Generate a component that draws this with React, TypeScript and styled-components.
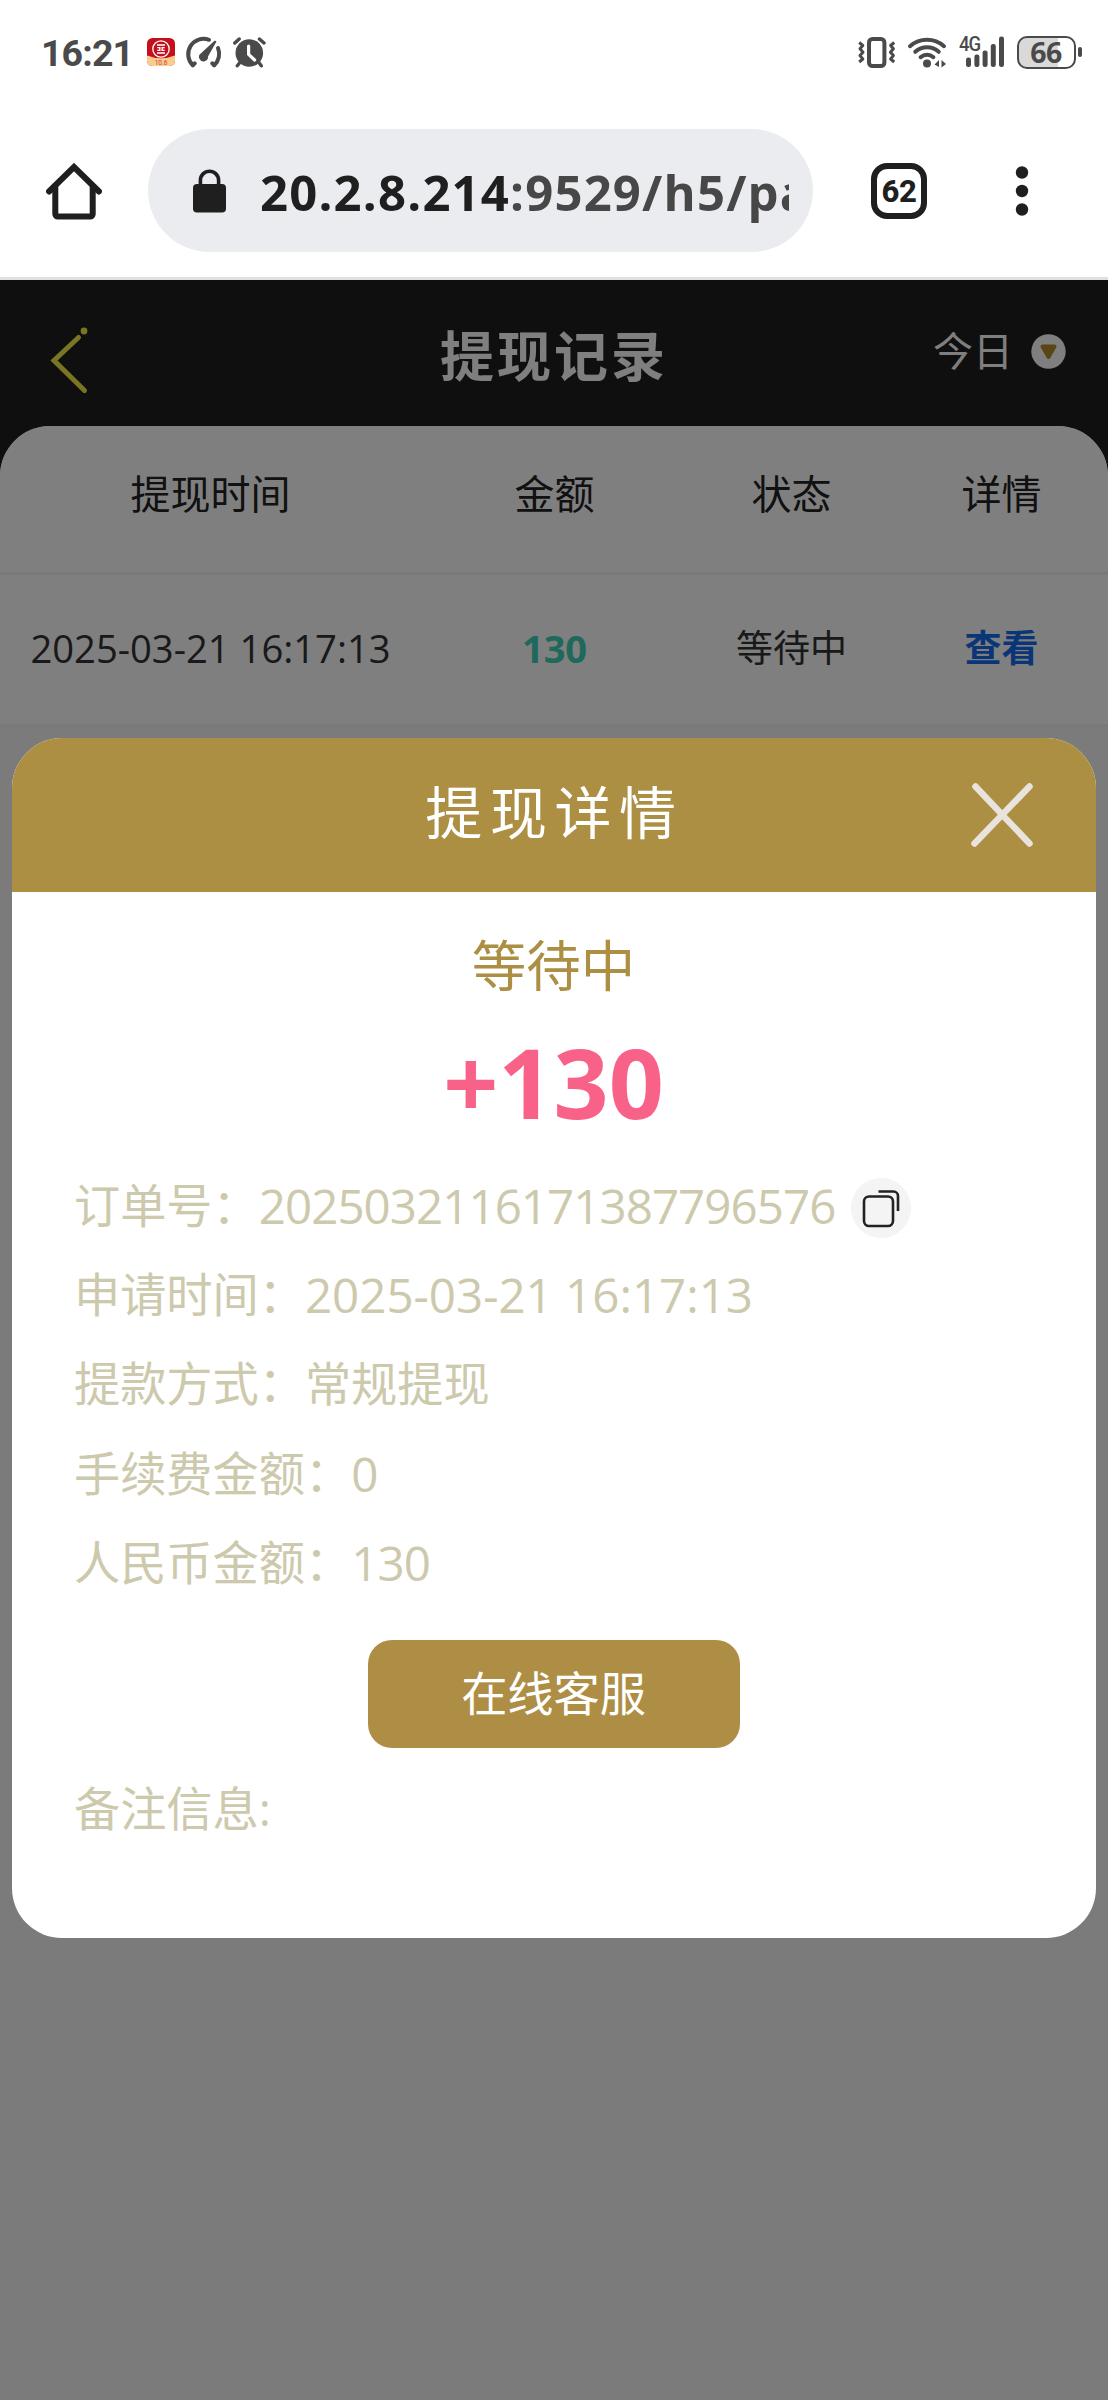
import React from "react";
import styled, { createGlobalStyle } from "styled-components";

const Global = createGlobalStyle`
  * { box-sizing: border-box; }
  body {
    margin: 0;
    background: #f7f7f7;
    font-family: "Open Sans", "Noto Sans CJK SC", sans-serif;
  }
`;

const Screen = styled.div`
  width: 1108px;
  height: 2400px;
  display: flex;
  flex-direction: column;
  overflow: hidden;
`;

const StatusBar = styled.div`
  flex: none;
  height: 104px;
  padding: 0 26px 0 41px;
  display: flex;
  align-items: center;
  background: #fff;
  color: #4a4a4a;
`;

const Clock = styled.span`
  width: 106px;
  padding-top: 2px;
  font: 700 37.5px/40px Roboto, sans-serif;
  letter-spacing: -0.9px;
`;

const StatusIcon = styled.svg<{ $gap?: number }>`
  flex: none;
  display: block;
  overflow: visible;
  margin-left: ${(p) => p.$gap ?? 0}px;
`;

const Spacer = styled.div`
  flex: 1;
`;

const Signal = styled.div`
  position: relative;
  width: 44px;
  height: 32px;
  margin-left: 13px;
`;

const SignalLabel = styled.span`
  position: absolute;
  left: -1px;
  top: -1px;
  font: 500 21px/19px Roboto, sans-serif;
  letter-spacing: -1px;
  transform: scaleX(0.88);
  transform-origin: left;
`;

const Battery = styled.div`
  width: 59px;
  height: 33px;
  margin-left: 13px;
  border: 2.5px solid #4a4a4a;
  border-radius: 10px;
  background: linear-gradient(to right, #d9d9d9 70%, #fff 70%);
  font: 700 28.5px/28px "Open Sans", sans-serif;
  letter-spacing: -0.5px;
  text-align: center;
`;

const BatteryTip = styled.div`
  width: 4px;
  height: 10px;
  margin-left: 2.5px;
  border-radius: 2px;
  background: #4a4a4a;
`;

const BrowserBar = styled.div`
  flex: none;
  height: 176px;
  padding: 25px 79px 0 46px;
  display: flex;
  align-items: flex-start;
  background: #fff;
  border-bottom: 3px solid #e0e0e0;
`;

const BarSlot = styled.div<{ $width: number; $left?: number }>`
  width: ${(p) => p.$width}px;
  margin-left: ${(p) => p.$left ?? 0}px;
  height: 124px;
  display: flex;
  align-items: center;
`;

const AddressPill = styled.div`
  width: 665px;
  height: 123px;
  margin-left: 46px;
  padding: 0 24px 0 45px;
  display: flex;
  align-items: center;
  border-radius: 62px;
  background: #ebecf0;
`;

const Url = styled.div`
  flex: 1;
  display: flex;
  margin-left: 34px;
  padding-top: 2px;
  overflow: hidden;
  white-space: nowrap;
  font: 700 49px/70px "Open Sans", sans-serif;
  letter-spacing: 1.2px;
  color: #1f1f1f;
`;

const UrlPath = styled.span`
  color: #474747;
`;

const TabCount = styled.div`
  width: 56px;
  height: 56px;
  border: 6px solid #1f1f1f;
  border-radius: 16px;
  font: 800 31px/45px Roboto, sans-serif;
  letter-spacing: -0.5px;
  text-align: center;
  color: #1f1f1f;
`;

const Page = styled.main`
  position: relative;
  flex: 1;
  display: flex;
  flex-direction: column;
  background: #1e1e1e;
`;

const PageHeader = styled.header`
  height: 146px;
  display: grid;
  grid-template-columns: 300px 1fr 300px;
  align-items: center;
  color: #fff;
`;

const BackArrow = styled.svg`
  margin: 14px 0 0 50px;
`;

const PageTitle = styled.h1`
  margin: 6px 0 0;
  font-size: 54px;
  line-height: 80px;
  font-weight: 700;
  letter-spacing: 3px;
  text-align: center;
`;

const DayFilter = styled.div`
  display: flex;
  justify-content: flex-end;
  align-items: center;
  padding: 0 42px 4px 0;
  gap: 18px;
  font-size: 40px;
  line-height: 60px;
`;

const Records = styled.section`
  flex: 1;
  border-radius: 50px 50px 0 0;
  background: #f7f7f7;
  overflow: hidden;
`;

const RecordRow = styled.div<{ $head?: boolean }>`
  display: grid;
  grid-template-columns: 421px 267px 207px 213px;
  align-items: center;
  text-align: center;
  height: ${(p) => (p.$head ? 149 : 152)}px;
  padding-bottom: ${(p) => (p.$head ? 10 : 4)}px;
  border-bottom: 3px solid #f3f3f3;
  background: #fff;
  font-size: ${(p) => (p.$head ? 40 : 37)}px;
  line-height: 60px;
  color: ${(p) => (p.$head ? "#222" : "#333")};
`;

const Time = styled.span`
  font-size: 38.2px;
`;

const Amount = styled.span`
  font-size: 38px;
  font-weight: 700;
  color: #3cd0b8;
`;

const ViewLink = styled.a`
  font-weight: 700;
  color: #146cf0;
`;

const Mask = styled.div`
  position: absolute;
  inset: 0;
  display: flex;
  justify-content: center;
  align-items: flex-start;
  padding-top: 458px;
  background: rgba(0, 0, 0, 0.5);
`;

const Dialog = styled.div`
  width: 1084px;
  height: 1200px;
  border-radius: 50px;
  overflow: hidden;
  background: #fff;
  color: #cdc9ac;
`;

const DialogHeader = styled.div`
  height: 154px;
  display: grid;
  grid-template-columns: 180px 1fr 180px;
  align-items: center;
  background: #ac8f43;
`;

const DialogTitle = styled.h2`
  grid-column: 2;
  margin: 0;
  padding: 0 0 6px 1px;
  font-weight: 400;
  font-size: 57px;
  line-height: 80px;
  letter-spacing: 7.6px;
  text-align: center;
  color: #fff;
`;

const DialogBody = styled.div`
  padding: 38px 63px 0 62px;
  display: flex;
  flex-direction: column;
`;

const Status = styled.div`
  font-size: 54.5px;
  line-height: 70px;
  text-align: center;
  color: #ac8f43;
`;

const Total = styled.div`
  height: 146px;
  margin-top: 15px;
  font: 700 96.5px/134px "Open Sans", sans-serif;
  text-align: center;
  color: #f96288;
`;

const Field = styled.div`
  height: 89.3px;
  display: flex;
  align-items: center;
  font-size: 46.2px;
  line-height: 70px;
  white-space: nowrap;
`;

const FieldValue = styled.span<{ $numeric?: boolean; $spacing?: number }>`
  font-size: ${(p) => (p.$numeric ? 47.5 : 46.2)}px;
  letter-spacing: ${(p) => p.$spacing ?? 0}px;
`;

const CopyButton = styled.button`
  width: 60px;
  height: 60px;
  margin: 5px 0 0 16px;
  padding: 0;
  border: 0;
  border-radius: 50%;
  background: #f4f4f4;
`;

const ServiceButton = styled.button`
  align-self: center;
  width: 372px;
  height: 108px;
  margin: 33px 0 16px;
  padding: 0 0 6px;
  border: 0;
  border-radius: 24px;
  background: #ae8e44;
  font-family: inherit;
  font-size: 46.2px;
  color: #fff;
`;

const HomeIcon = () => (
  <svg width="56" height="57" viewBox="0 0 56 57" fill="none" stroke="#1f1f1f" strokeWidth="6" strokeLinecap="round">
    <path d="M3 28.5 28 4 53 28.5" strokeLinejoin="miter" />
    <path d="M9.3 24V51a2.5 2.5 0 0 0 2.5 2.5H44.2a2.5 2.5 0 0 0 2.5-2.5V24" />
  </svg>
);

const LockIcon = () => (
  <svg width="33" height="44" viewBox="0 0 33 44">
    <path d="M7.4 17V11.3a9.1 9.1 0 0 1 18.2 0V17" fill="none" stroke="#1f1f1f" strokeWidth="3.6" />
    <rect y="15" width="33" height="28.5" rx="4" fill="#1f1f1f" />
  </svg>
);

const BankIcon = () => (
  <StatusIcon width="28" height="28" viewBox="0 0 28 28">
    <defs>
      <clipPath id="bank"><rect width="28" height="28" rx="5.5" /></clipPath>
    </defs>
    <g clipPath="url(#bank)">
      <rect width="28" height="28" fill="#c4101c" />
      <path d="M0 17.5Q14 23 28 17.5V28H0z" fill="#fbcb90" />
    </g>
    <circle cx="14" cy="11" r="8.2" fill="#c4101c" stroke="#fff" strokeWidth="1.3" />
    <path d="M10 7H18M10 15H18M10.3 9.6H12.8V12.4H10.3M17.7 9.6H15.2V12.4H17.7" stroke="#fff" strokeWidth="1.4" fill="none" />
    <text x="14" y="26.6" textAnchor="middle" fontFamily="Roboto, sans-serif" fontSize="6.5" fill="#c8452f">10.6</text>
  </StatusIcon>
);

const GaugeIcon = () => (
  <StatusIcon $gap={11} width="35" height="31" viewBox="0 0 35 31" fill="none" stroke="#4a4a4a" strokeWidth="4" strokeLinecap="round">
    <path d="M6.8 28.2A15.4 15.4 0 0 1 23 2.8" />
    <path d="M32 11A15.4 15.4 0 0 1 28.2 28.2" />
    <path d="M6.8 28.2L8.8 26.3M28.2 28.2L26.2 26.3" />
    <path d="M30.5 4.5 22 19.5A4.5 4.5 0 1 1 15 16.2L28.8 3.6z" fill="#4a4a4a" stroke="none" />
  </StatusIcon>
);

const AlarmIcon = () => (
  <StatusIcon $gap={12} width="33" height="31" viewBox="0 0 33 31" stroke="#4a4a4a" strokeLinecap="round" fill="none">
    <circle cx="16.3" cy="16" r="13.8" fill="#4a4a4a" stroke="none" />
    <path d="M1.8 6 6.2 2M26.4 2 31 6" strokeWidth="3.4" />
    <path d="M6.5 26 4.3 28.8M26.2 26 28.3 28.8" strokeWidth="3.4" />
    <path d="M15.6 9V17.4L21.6 23" stroke="#fff" strokeWidth="3.2" />
  </StatusIcon>
);

const VibrateIcon = () => (
  <StatusIcon width="38" height="31" viewBox="0 0 38 31" fill="none" stroke="#4a4a4a">
    <rect x="11" y="2" width="15.4" height="27" rx="3.5" strokeWidth="4" />
    <path d="M1.2 5.5 4.8 8.5 2 11.8 5 15.2 2 18.6 4.8 22 1.2 25M36.2 5.5 32.6 8.5 35.4 11.8 32.4 15.2 35.4 18.6 32.6 22 36.2 25" strokeWidth="3" strokeLinejoin="round" />
  </StatusIcon>
);

const WifiIcon = () => (
  <StatusIcon $gap={12} width="39" height="31" viewBox="0 0 39 31" fill="none" stroke="#4a4a4a" strokeWidth="4" strokeLinecap="round">
    <path d="M2 9.2A25.5 25.5 0 0 1 36 9.2" />
    <path d="M7.3 14.8A17.5 17.5 0 0 1 30.7 14.8" />
    <path d="M12.6 20.2A9.8 9.8 0 0 1 25.4 20.2" />
    <circle cx="19" cy="26.6" r="4" fill="#4a4a4a" stroke="none" />
    <path d="M26.5 27.5 31 23V30M33.5 30.5V23L38 27" fill="#4a4a4a" stroke="none" />
  </StatusIcon>
);

const bars = [
  { x: 6, top: 21.5 },
  { x: 14.4, top: 18.5 },
  { x: 22.6, top: 14.5 },
  { x: 30.8, top: 8 },
  { x: 39, top: 0.5 },
];

const rows = [
  { label: "申请时间：", value: "2025-03-21 16:17:13", numeric: true },
  { label: "提款方式：", value: "常规提现" },
  { label: "手续费金额：", value: "0", numeric: true, spacing: -1 },
  { label: "人民币金额：", value: "130", numeric: true, spacing: -0.8 },
];

export default function App() {
  return (
    <Screen lang="zh-CN">
      <Global />
      <StatusBar>
        <Clock>16:21</Clock>
        <BankIcon />
        <GaugeIcon />
        <AlarmIcon />
        <Spacer />
        <VibrateIcon />
        <WifiIcon />
        <Signal>
          <SignalLabel>4G</SignalLabel>
          <StatusIcon width="44" height="32" fill="#4a4a4a">
            {bars.map((b) => (
              <rect key={b.x} x={b.x} y={b.top} width="5" height={31 - b.top} rx="2.2" />
            ))}
          </StatusIcon>
        </Signal>
        <Battery>66</Battery>
        <BatteryTip />
      </StatusBar>

      <BrowserBar>
        <BarSlot $width={56}><HomeIcon /></BarSlot>
        <AddressPill>
          <LockIcon />
          <Url>
            <span>20.2.8.214</span>
            <UrlPath>:9529/h5/pa</UrlPath>
          </Url>
        </AddressPill>
        <BarSlot $width={56} $left={58}><TabCount>62</TabCount></BarSlot>
        <BarSlot $width={14} $left={88}>
          <svg width="14" height="52" fill="#1f1f1f">
            <circle cx="7" cy="7.5" r="6.2" />
            <circle cx="7" cy="26" r="6.2" />
            <circle cx="7" cy="44.5" r="6.2" />
          </svg>
        </BarSlot>
      </BrowserBar>

      <Page>
        <PageHeader>
          <BackArrow width="42" height="70" viewBox="0 0 42 70" fill="none" stroke="#f4ea46" strokeWidth="5" strokeLinecap="round">
            <path d="M28.5 12.5 4 35.5 34.5 65.5" />
            <circle cx="34" cy="6" r="3.4" fill="#f4ea46" stroke="none" />
          </BackArrow>
          <PageTitle>提现记录</PageTitle>
          <DayFilter>
            今日
            <svg width="35" height="35" viewBox="0 0 35 35">
              <circle cx="17.5" cy="17.5" r="17.2" fill="#fff" />
              <path d="M11.5 12.5H23.5L17.5 23z" fill="#b48a2c" stroke="#b48a2c" strokeWidth="4" strokeLinejoin="round" />
            </svg>
          </DayFilter>
        </PageHeader>
        <Records>
          <RecordRow $head>
            <span>提现时间</span>
            <span>金额</span>
            <span>状态</span>
            <span>详情</span>
          </RecordRow>
          <RecordRow>
            <Time>2025-03-21 16:17:13</Time>
            <Amount>130</Amount>
            <span>等待中</span>
            <ViewLink>查看</ViewLink>
          </RecordRow>
        </Records>

        <Mask>
          <Dialog>
            <DialogHeader>
              <DialogTitle>提现详情</DialogTitle>
              <svg width="180" height="70" viewBox="0 0 180 70" stroke="#e9e3de" strokeWidth="6.5" strokeLinecap="round">
                <path d="M59.5 6.5 113.5 63.5M113.5 6.5 58.5 63.5" />
              </svg>
            </DialogHeader>
            <DialogBody>
              <Status>等待中</Status>
              <Total>+130</Total>
              <Field>
                订单号：
                <FieldValue $numeric $spacing={-0.95}>2025032116171387796576</FieldValue>
                <CopyButton aria-label="复制">
                  <svg width="60" height="60" viewBox="0 0 60 60" fill="none" stroke="#222" strokeWidth="2.6">
                    <rect x="13" y="18.5" width="29" height="29.5" rx="5" />
                    <path d="M27.5 13.5H42.5a4.5 4.5 0 0 1 4.5 4.5V33" />
                  </svg>
                </CopyButton>
              </Field>
              {rows.map((r) => (
                <Field key={r.label}>
                  {r.label}
                  <FieldValue $numeric={r.numeric} $spacing={r.spacing}>{r.value}</FieldValue>
                </Field>
              ))}
              <ServiceButton>在线客服</ServiceButton>
              <Field>备注信息:</Field>
            </DialogBody>
          </Dialog>
        </Mask>
      </Page>
    </Screen>
  );
}
